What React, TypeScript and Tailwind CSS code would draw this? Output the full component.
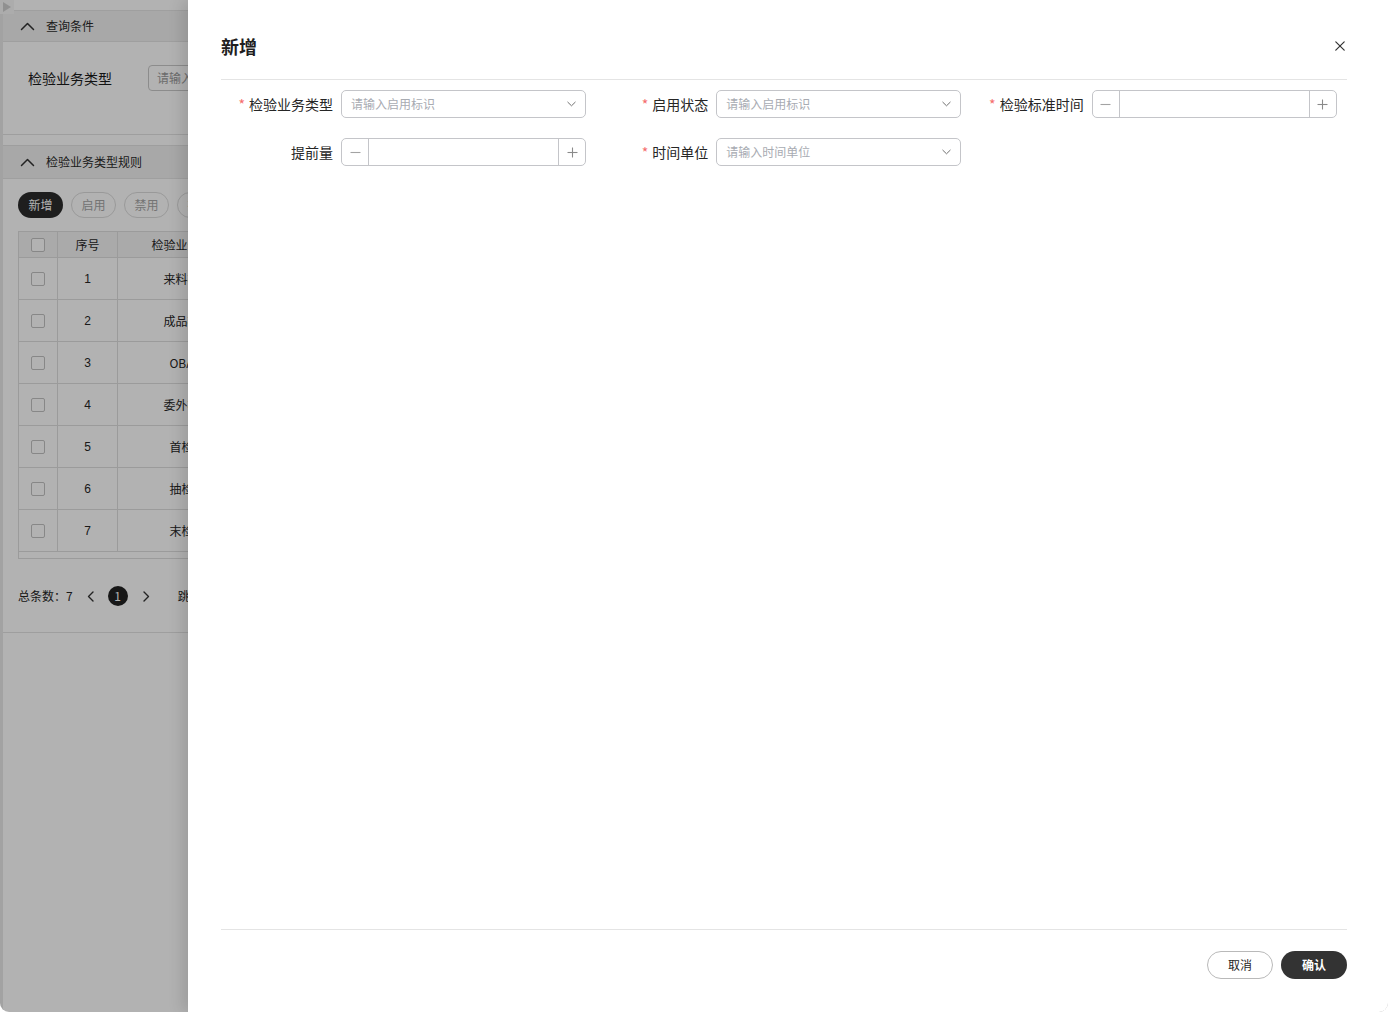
import React from "react";

const rows = [
  { n: 1, t: "来料检验" },
  { n: 2, t: "成品检验" },
  { n: 3, t: "OBA检" },
  { n: 4, t: "委外检验" },
  { n: 5, t: "首检验" },
  { n: 6, t: "抽检验" },
  { n: 7, t: "末检验" },
];

function Checkbox() {
  return <div className="w-[14px] h-[14px] rounded-[2px] border border-[#c2c2c2] bg-white" />;
}

function ChevUp() {
  return (
    <svg width="15" height="9" viewBox="0 0 15 9" fill="none" stroke="#333" strokeWidth="1.5" strokeLinecap="round" strokeLinejoin="round">
      <polyline points="1.5,7.5 7.5,1.5 13.5,7.5" />
    </svg>
  );
}

function ChevDown() {
  return (
    <svg width="9" height="6" viewBox="0 0 9 6" fill="none" stroke="#707070" strokeWidth="1" strokeLinecap="round" strokeLinejoin="round">
      <polyline points="0.8,1.2 4.5,4.8 8.2,1.2" />
    </svg>
  );
}

function ChevSide({ dir }: { dir: "l" | "r" }) {
  return (
    <svg width="7" height="11" viewBox="0 0 7 11" fill="none" stroke="#333" strokeWidth="1.4" strokeLinecap="round" strokeLinejoin="round">
      {dir === "l" ? <polyline points="6,1 1.5,5.5 6,10" /> : <polyline points="1,1 5.5,5.5 1,10" />}
    </svg>
  );
}

function MinusIcon() {
  return (
    <svg width="11" height="11" viewBox="0 0 11 11" fill="none" stroke="#a3a3a3" strokeWidth="1.1">
      <line x1="0.5" y1="5.5" x2="10.5" y2="5.5" />
    </svg>
  );
}

function PlusIcon() {
  return (
    <svg width="11" height="11" viewBox="0 0 11 11" fill="none" stroke="#8a8a8a" strokeWidth="1.1">
      <line x1="0.5" y1="5.5" x2="10.5" y2="5.5" />
      <line x1="5.5" y1="0.5" x2="5.5" y2="10.5" />
    </svg>
  );
}

function Label({ text, required }: { text: string; required?: boolean }) {
  return (
    <div className="w-[112px] shrink-0 text-right text-[14px] leading-[20px] text-[#262626] whitespace-nowrap">
      {required && <span className="text-[#f56c6c] mr-[4px]">*</span>}
      {text}
    </div>
  );
}

function Select({ placeholder }: { placeholder: string }) {
  return (
    <div className="ml-[8px] w-[245px] h-[28px] border border-[#c4c5c9] rounded-[5px] pl-[9px] pr-[9px] flex items-center justify-between">
      <span className="text-[12px] text-[#a8abb2]">{placeholder}</span>
      <ChevDown />
    </div>
  );
}

function NumberInput() {
  return (
    <div className="ml-[8px] w-[245px] h-[28px] border border-[#c4c5c9] rounded-[5px] flex">
      <div className="w-[27px] border-r border-[#c4c5c9] flex items-center justify-center">
        <MinusIcon />
      </div>
      <div className="flex-1" />
      <div className="w-[27px] border-l border-[#c4c5c9] flex items-center justify-center">
        <PlusIcon />
      </div>
    </div>
  );
}

export default function App() {
  return (
    <div className="w-[1388px] h-[1012px] bg-white font-['Noto_Sans_CJK_SC','Microsoft_YaHei',sans-serif]">
      <div className="relative w-full h-full overflow-hidden rounded-b-[9px]">
        {/* background page */}
        <div className="h-full bg-white border-l-[3px] border-[#e9e9e9] flex flex-col">
          <div className="h-[10px]" />
          {/* search card */}
          <div className="border-b border-[#e2e2e2]">
            <div className="h-[32px] bg-[#f1f1f1] border-y border-[#e4e4e4] flex items-center pl-[17px] gap-[11px]">
              <ChevUp />
              <span className="text-[12px] text-[#2a2a2a]">查询条件</span>
            </div>
            <div className="h-[92px] flex items-start pt-[23px] pl-[25px]">
              <div className="w-[120px] text-[14px] leading-[26px] text-[#1a1a1a]">检验业务类型</div>
              <div className="w-[220px] h-[26px] rounded-[4px] border border-[#c9c9c9] px-[8px] flex items-center text-[12px] text-[#9a9a9a]">
                请输入检验业务类型
              </div>
            </div>
          </div>
          <div className="h-[10px]" />
          {/* rules card */}
          <div className="border-y border-[#e2e2e2]">
            <div className="h-[33px] bg-[#f1f1f1] border-b border-[#e4e4e4] flex items-center pl-[17px] gap-[11px]">
              <ChevUp />
              <span className="text-[12px] text-[#2a2a2a]">检验业务类型规则</span>
            </div>
            <div className="px-[15px] pt-[13px] pb-[26px]">
              <div className="flex gap-[8px]">
                <div className="h-[26px] w-[45px] rounded-full bg-[#2b2b2b] text-white text-[12px] flex items-center justify-center">新增</div>
                <div className="h-[26px] w-[45px] rounded-full border border-[#dcdcdc] text-[#a6a6a6] text-[12px] flex items-center justify-center">启用</div>
                <div className="h-[26px] w-[45px] rounded-full border border-[#dcdcdc] text-[#a6a6a6] text-[12px] flex items-center justify-center">禁用</div>
                <div className="h-[26px] w-[45px] rounded-full border border-[#dcdcdc] text-[#a6a6a6] text-[12px] flex items-center justify-center">批量</div>
              </div>
              <div className="mt-[13px] border border-[#dedede]">
                <div className="h-[26px] flex bg-[#f4f4f4] border-b border-[#dedede] text-[12px] text-[#262626]">
                  <div className="w-[39px] border-r border-[#dedede] flex items-center justify-center"><Checkbox /></div>
                  <div className="w-[60px] border-r border-[#dedede] flex items-center justify-center">序号</div>
                  <div className="w-[140px] border-r border-[#dedede] flex items-center justify-center">检验业务类型</div>
                  <div className="flex-1" />
                </div>
                {rows.map((r) => (
                  <div key={r.n} className="h-[42px] flex border-b border-[#dedede] text-[12px] text-[#262626]">
                    <div className="w-[39px] border-r border-[#dedede] flex items-center justify-center"><Checkbox /></div>
                    <div className="w-[60px] border-r border-[#dedede] flex items-center justify-center font-['Liberation_Sans',sans-serif]">{r.n}</div>
                    <div className="w-[140px] border-r border-[#dedede] flex items-center justify-center">{r.t}</div>
                    <div className="flex-1" />
                  </div>
                ))}
                <div className="h-[6px]" />
              </div>
              <div className="mt-[27px] h-[20px] flex items-center text-[12px] text-[#262626]">
                <span>总条数：7</span>
                <div className="ml-[14px]"><ChevSide dir="l" /></div>
                <div className="ml-[14px] w-[20px] h-[20px] rounded-full bg-[#222] text-white flex items-center justify-center text-[12px]">1</div>
                <div className="ml-[15px]"><ChevSide dir="r" /></div>
                <span className="ml-[28px]">跳至</span>
              </div>
            </div>
          </div>
        </div>
        {/* top-left toggle */}
        <div className="absolute top-0 left-0 w-[14px] h-[14px] bg-[#f7f7f7] flex items-center justify-center">
          <div className="w-0 h-0 border-y-[5px] border-y-transparent border-l-[8px] border-l-[#cfcfcf]" />
        </div>
        {/* overlay */}
        <div className="absolute inset-0 bg-black/30" />
        {/* drawer */}
        <div className="absolute top-0 right-0 bottom-0 w-[1200px] bg-white flex flex-col pl-[33px] pr-[41px] shadow-[-6px_0_14px_rgba(0,0,0,0.12)]">
          <div className="pt-[34px] pb-[21px] border-b border-[#e4e4e4] flex items-center justify-between">
            <span className="text-[18px] leading-[24px] font-bold text-[#1f1f1f]">新增</span>
            <svg width="10" height="10" viewBox="0 0 10 10" fill="none" stroke="#333" strokeWidth="1.2" strokeLinecap="round" className="mr-[2px]">
              <line x1="0.8" y1="0.8" x2="9.2" y2="9.2" />
              <line x1="9.2" y1="0.8" x2="0.8" y2="9.2" />
            </svg>
          </div>
          <div className="flex-1 pt-[10px]">
            <div className="grid grid-cols-3 gap-y-[20px]">
              <div className="flex items-center">
                <Label text="检验业务类型" required />
                <Select placeholder="请输入启用标识" />
              </div>
              <div className="flex items-center">
                <Label text="启用状态" required />
                <Select placeholder="请输入启用标识" />
              </div>
              <div className="flex items-center">
                <Label text="检验标准时间" required />
                <NumberInput />
              </div>
              <div className="flex items-center">
                <Label text="提前量" />
                <NumberInput />
              </div>
              <div className="flex items-center">
                <Label text="时间单位" required />
                <Select placeholder="请输入时间单位" />
              </div>
            </div>
          </div>
          <div className="border-t border-[#e4e4e4] pt-[21px] pb-[33px] flex justify-end gap-[8px]">
            <div className="w-[66px] h-[28px] rounded-full border border-[#b9b9b9] text-[12px] text-[#262626] flex items-center justify-center">取消</div>
            <div className="w-[66px] h-[28px] rounded-full bg-[#333333] text-[12px] font-bold text-white flex items-center justify-center">确认</div>
          </div>
        </div>
      </div>
    </div>
  );
}
